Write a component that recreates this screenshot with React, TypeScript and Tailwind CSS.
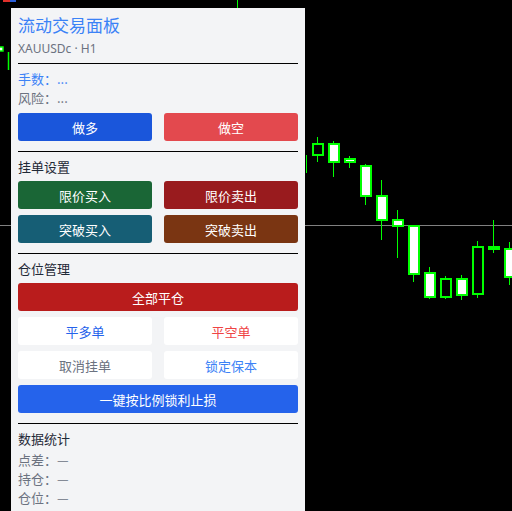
import React from 'react';

type Candle = {
  x: number;
  high: number;
  low: number;
  top: number;
  bottom: number;
  filled: boolean;
};

const candles: Candle[] = [
  { x: 317, high: 137, low: 162, top: 144, bottom: 155, filled: false },
  { x: 333, high: 141, low: 177, top: 144, bottom: 162, filled: true },
  { x: 349, high: 156, low: 168, top: 159, bottom: 162, filled: true },
  { x: 365, high: 164, low: 205, top: 166, bottom: 196, filled: true },
  { x: 381, high: 180, low: 240, top: 196, bottom: 220, filled: true },
  { x: 397, high: 210, low: 258, top: 220, bottom: 226, filled: true },
  { x: 413, high: 226, low: 282, top: 226, bottom: 274, filled: true },
  { x: 429, high: 267, low: 299, top: 273, bottom: 297, filled: true },
  { x: 445, high: 276, low: 299, top: 279, bottom: 297, filled: false },
  { x: 461, high: 275, low: 300, top: 279, bottom: 295, filled: true },
  { x: 477, high: 241, low: 298, top: 247, bottom: 294, filled: false },
  { x: 493, high: 220, low: 253, top: 247, bottom: 249, filled: true },
  { x: 509, high: 242, low: 285, top: 249, bottom: 277, filled: true },
];

const Chart = () => (
  <svg className="absolute inset-0" width={512} height={511} viewBox="0 0 512 511">
    <line x1={0} y1={225.5} x2={512} y2={225.5} stroke="#808080" strokeWidth={1} />
    {/* bits of the chart peeking out around the panel */}
    <rect x={3} y={0} width={7} height={2} fill="#e0302b" />
    <rect x={10} y={0} width={6} height={2} fill="#2b5fd9" />
    <line x1={237.5} y1={0} x2={237.5} y2={8} stroke="#00ff00" strokeWidth={1} />
    <rect x={-2} y={47} width={5} height={4} fill="#fff" stroke="#00ff00" strokeWidth={1.5} />
    <line x1={8.5} y1={52} x2={8.5} y2={70} stroke="#00ff00" strokeWidth={1.5} />
    <line x1={306.5} y1={155} x2={306.5} y2={173} stroke="#00ff00" strokeWidth={1} />
    {candles.map((c) => (
      <g key={c.x}>
        <line x1={c.x + 0.5} y1={c.high} x2={c.x + 0.5} y2={c.low} stroke="#00ff00" strokeWidth={1} />
        <rect
          x={c.x - 4}
          y={c.top}
          width={10}
          height={Math.max(c.bottom - c.top, 2)}
          fill={c.filled ? '#ffffff' : '#000000'}
          stroke="#00ff00"
          strokeWidth={2}
        />
      </g>
    ))}
  </svg>
);

const Btn = ({ label, className }: { label: string; className: string }) => (
  <button className={`h-[28px] rounded-[3px] text-[13px] leading-none flex items-center justify-center ${className}`}>
    {label}
  </button>
);

const Section = ({ title, children }: { title: string; children: React.ReactNode }) => (
  <div className="mt-[10px] border-t border-black pt-[5px]">
    <h3 className="text-[13px] leading-[19px] text-[#1f2937] mb-[5px]">{title}</h3>
    {children}
  </div>
);

export default function App() {
  return (
    <div
      className="relative h-[511px] w-[512px] overflow-hidden bg-black pl-[11px] pt-[8px]"
      style={{ fontFamily: '"Noto Sans CJK SC", "Noto Sans", sans-serif' }}
    >
      <Chart />
      <div className="relative w-[294px] min-h-[520px] bg-[#f3f4f6] px-[7px] pt-[4px]">
        <h1 className="text-[17px] leading-[26px] text-[#3b82f6]">流动交易面板</h1>
        <p className="mt-[2px] font-['Noto_Sans',sans-serif] text-[12px] leading-[18px] text-[#6b7280]">
          XAUUSDc · H1
        </p>

        <div className="mt-[5px] border-t border-black pt-[5px] text-[13px] leading-[19px]">
          <p className="text-[#3b82f6]">手数：...</p>
          <p className="text-[#6b7280]">风险：...</p>
          <div className="mt-[6px] grid grid-cols-2 gap-x-[12px]">
            <Btn label="做多" className="bg-[#1a56db] text-white" />
            <Btn label="做空" className="bg-[#e3494e] text-white" />
          </div>
        </div>

        <Section title="挂单设置">
          <div className="grid grid-cols-2 gap-x-[12px] gap-y-[6px]">
            <Btn label="限价买入" className="bg-[#1a6636] text-white" />
            <Btn label="限价卖出" className="bg-[#991b1e] text-white" />
            <Btn label="突破买入" className="bg-[#165e75] text-white" />
            <Btn label="突破卖出" className="bg-[#7a3512] text-white" />
          </div>
        </Section>

        <Section title="仓位管理">
          <div className="grid grid-cols-2 gap-x-[12px] gap-y-[6px]">
            <Btn label="全部平仓" className="col-span-2 bg-[#b91c1c] text-white" />
            <Btn label="平多单" className="bg-white text-[#2563eb]" />
            <Btn label="平空单" className="bg-white text-[#ef4444]" />
            <Btn label="取消挂单" className="bg-white text-[#6b7280]" />
            <Btn label="锁定保本" className="bg-white text-[#3b82f6]" />
            <Btn label="一键按比例锁利止损" className="col-span-2 bg-[#2563eb] text-white" />
          </div>
        </Section>

        <Section title="数据统计">
          <div className="-mt-[3px] text-[13px] leading-[19px] text-[#6b7280]">
            <p>点差：—</p>
            <p>持仓：—</p>
            <p>仓位：—</p>
            <p>盈亏：—</p>
          </div>
        </Section>
      </div>
    </div>
  );
}
